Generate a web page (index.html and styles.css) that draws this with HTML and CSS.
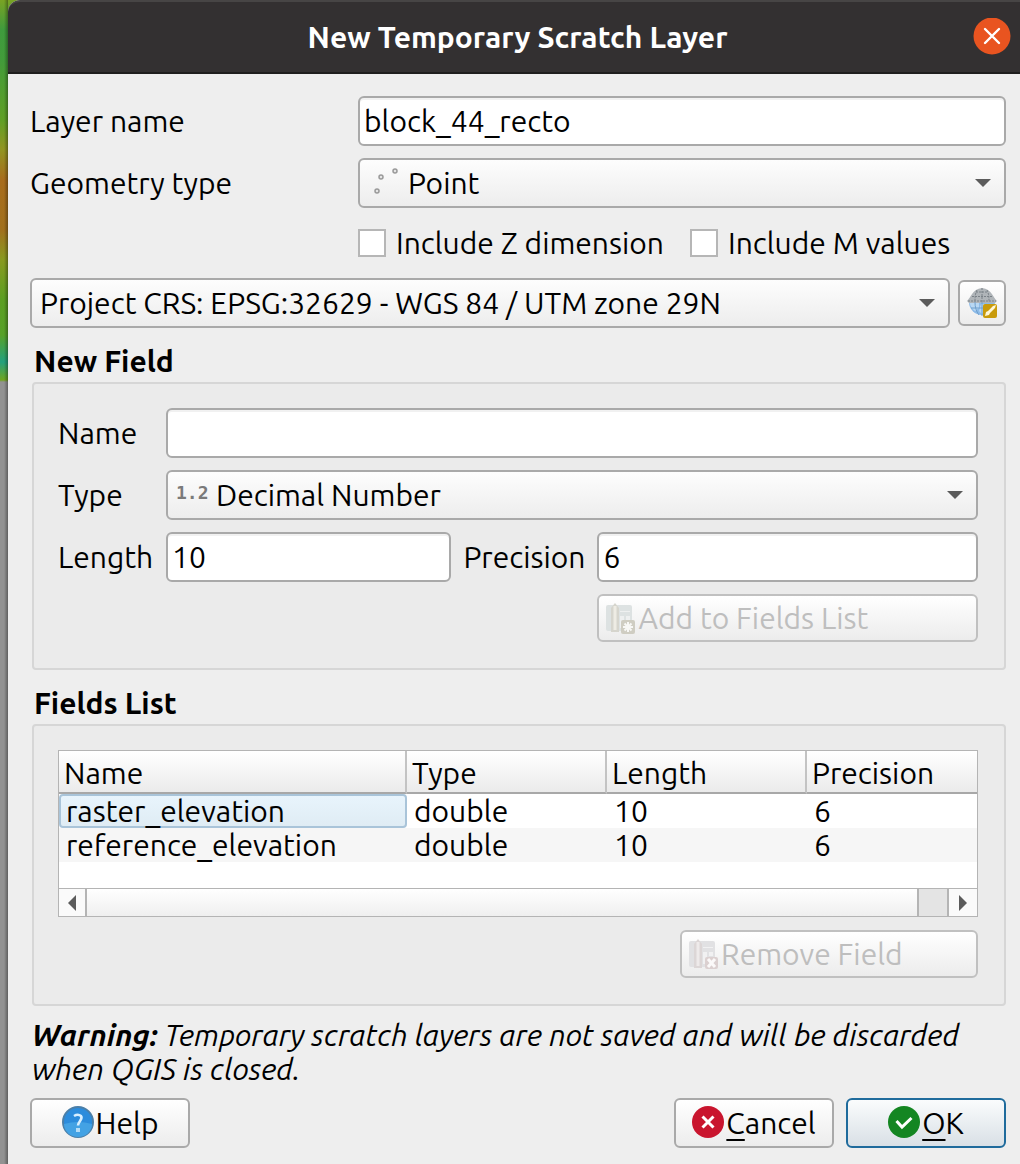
FILE: index.html
```html
<!DOCTYPE html>
<html lang="en">
<head>
<meta charset="utf-8">
<title>New Temporary Scratch Layer</title>
<link rel="stylesheet" href="styles.css">
</head>
<body>
<main class="dialog">
  <header class="titlebar">
    <h1 class="title">New Temporary Scratch Layer</h1>
    <button class="close" type="button" aria-label="Close">
      <svg width="38" height="38" viewBox="0 0 38 38"><circle cx="19" cy="18" r="18.500" fill="#e95420"/><path d="M12 11l14 14M26 11L12 25" stroke="#fff" stroke-width="2.4" stroke-linecap="round"/></svg>
    </button>
  </header>

  <form class="content">
    <div class="layer-grid">
      <label for="layer-name">Layer name</label>
      <input class="field" id="layer-name" type="text" value="block_44_recto">
      <label for="geometry">Geometry type</label>
      <div class="combo">
        <select class="field with-icon" id="geometry"><option>Point</option></select>
        <svg class="lead" width="32" height="32" viewBox="0 0 32 32" fill="#e4e4e4" stroke="#999" stroke-width="1.5"><circle cx="9" cy="24" r="2"/><circle cx="13" cy="10" r="2"/><circle cx="27" cy="4" r="2"/></svg>
        <svg class="arrow" width="16" height="8" viewBox="0 0 16 8"><path d="M0 0h16L8 8z" fill="#5b5b5b"/></svg>
      </div>
      <div class="checks">
        <label class="check"><input type="checkbox">Include Z dimension</label>
        <label class="check"><input type="checkbox">Include M values</label>
      </div>
    </div>

    <div class="crs-row">
      <div class="combo">
        <select class="field crs" aria-label="Coordinate reference system"><option>Project CRS: EPSG:32629 - WGS 84 / UTM zone 29N</option></select>
        <svg class="arrow" width="16" height="8" viewBox="0 0 16 8"><path d="M0 0h16L8 8z" fill="#5b5b5b"/></svg>
      </div>
      <button class="button tool" type="button" aria-label="Select CRS">
        <svg width="32" height="32" viewBox="0 0 32 32">
          <path d="M3 15h26a13 13 0 0 1-26 0z" fill="#8dbbe8"/>
          <path d="M4 16h9v5l-4 3c-3-2-5-5-5-8zM15 17h5v4l-4 6-3-3z" fill="#b9d8f3"/>
          <path d="M1 14C5 11 6 2 16 1c10 1 11 10 15 13l-2 2H3z" fill="#b0b5b9"/>
          <path d="M2 14h28M6 9.500h20M10 5h12M16 1v14M11 3C9 7 9 11 9 15M21 3c2 4 2 8 2 12" fill="none" stroke="#7b8288" stroke-width="1" stroke-dasharray="2 1"/>
          <path d="M9 15c0 5 1 9 4 13M16 15v14M5 21h13" fill="none" stroke="#6f9fcc"/>
          <rect x="17" y="17" width="14" height="14" rx="2" fill="#c99b0b"/>
          <path d="M19 29l1-4 2-1 5-5 3-1-1 3-5 5-1 2z" fill="#fff7d5"/>
        </svg>
      </button>
    </div>

    <section>
      <h2 class="heading">New Field</h2>
      <div class="group">
        <div class="field-grid">
          <label for="name">Name</label>
          <input class="field wide" id="name" type="text">
          <label for="type">Type</label>
          <div class="combo wide">
            <select class="field with-icon" id="type"><option>Decimal Number</option></select>
            <span class="lead decimal" aria-hidden="true">1.2</span>
            <svg class="arrow" width="16" height="8" viewBox="0 0 16 8"><path d="M0 0h16L8 8z" fill="#5b5b5b"/></svg>
          </div>
          <label for="length">Length</label>
          <input class="field" id="length" type="text" value="10">
          <label for="precision">Precision</label>
          <input class="field" id="precision" type="text" value="6">
          <button class="button add" type="button" disabled>
            <svg width="32" height="32" viewBox="0 0 32 32">
              <rect x="2" y="3" width="26" height="26" rx="2" fill="#dde2e2"/>
              <path d="M16 9h10v1h-10zM16 14h4v12h-4zM22 14h4v4h-4z" fill="#eef0f0"/>
              <path d="M7 6l4-5 4 5v24H7z" fill="#d6d5cd"/><path d="M11 4v24" stroke="#eeece4" stroke-width="3"/>
              <rect x="17" y="18" width="14" height="14" rx="2" fill="#cfcdc2"/>
              <path d="M24 20v10M19 25h10M20.500 21.500l7 7M27.500 21.500l-7 7" stroke="#f8f8f6" stroke-width="2"/>
            </svg>Add to Fields List
          </button>
        </div>
      </div>
    </section>

    <section>
      <h2 class="heading">Fields List</h2>
      <div class="group list-group">
        <div class="table-box">
          <table class="fields">
            <colgroup><col class="col-name"><col class="col-mid"><col class="col-mid"><col></colgroup>
            <thead><tr><th>Name</th><th>Type</th><th>Length</th><th>Precision</th></tr></thead>
            <tbody>
              <tr><td class="selected">raster_elevation</td><td>double</td><td>10</td><td>6</td></tr>
              <tr><td>reference_elevation</td><td>double</td><td>10</td><td>6</td></tr>
            </tbody>
          </table>
          <div class="scrollbar">
            <button class="step" type="button" aria-label="Scroll left"><svg width="8" height="16" viewBox="0 0 8 16"><path d="M8 0v16L0 8z" fill="#5b5b5b"/></svg></button>
            <div class="thumb"></div>
            <div class="track"></div>
            <button class="step" type="button" aria-label="Scroll right"><svg width="8" height="16" viewBox="0 0 8 16"><path d="M0 0v16l8-8z" fill="#5b5b5b"/></svg></button>
          </div>
        </div>
        <button class="button remove" type="button" disabled>
          <svg width="32" height="32" viewBox="0 0 32 32">
            <rect x="2" y="3" width="26" height="26" rx="2" fill="#e1e1e3"/>
            <path d="M16 9h10v1h-10zM16 14h4v12h-4zM22 14h4v4h-4z" fill="#f1f1f2"/>
            <path d="M7 6l4-5 4 5v24H7z" fill="#dcd6d6"/><path d="M11 4v24" stroke="#eeeaea" stroke-width="3"/>
            <rect x="18" y="19" width="13" height="12" rx="2" fill="#dbd0d0"/>
            <path d="M21 21l7 8M28 21l-7 8" stroke="#fbf9f9" stroke-width="3"/>
          </svg>Remove Field
        </button>
      </div>
    </section>

    <p class="warning"><strong>Warning:</strong> Temporary scratch layers are not saved and will be discarded when QGIS is closed.</p>

    <footer class="actions">
      <button class="button action help" type="button">
        <svg width="32" height="32" viewBox="0 0 32 32"><circle cx="16" cy="16" r="15" fill="#2c8cdc" stroke="#4b7fa8" stroke-width="2"/><path d="M2 18a14 13 0 0 0 28 0q-14-4-28 0z" fill="#43a2e4"/><path d="M12 10q4-2.500 7 0c2.500 3-3 5.500-3 9.500" fill="none" stroke="#d8efff" stroke-width="2.600"/><rect x="14" y="22" width="4" height="4" fill="#b5ddf7"/></svg>Help
      </button>
      <button class="button action" type="button">
        <svg width="32" height="32" viewBox="0 0 32 32"><circle cx="16" cy="16" r="16" fill="#c9152e"/><path d="M10.500 10.500l11 11M21.500 10.500l-11 11" stroke="#fff" stroke-width="3"/></svg><span><u>C</u>ancel</span>
      </button>
      <button class="button action ok" type="submit">
        <svg width="32" height="32" viewBox="0 0 32 32"><circle cx="16" cy="16" r="16" fill="#148622"/><path d="M8.500 15l5.500 6 9.500-9" fill="none" stroke="#fff" stroke-width="3"/></svg><span><u>O</u>K</span>
      </button>
    </footer>
  </form>
</main>
</body>
</html>
```
FILE: styles.css
```css
* { box-sizing: border-box; }

body {
  margin: 0;
  padding-left: 8px;
  min-height: 100vh;
  font: 30px/34px Ubuntu, "Noto Sans", sans-serif;
  color: #000;
  /* edge of the map canvas behind the dialog */
  background:
    linear-gradient(to right, transparent 4px, rgba(0, 0, 0, .35) 8px, transparent 8px),
    linear-gradient(#79a324 0, #3f9b3d 30px, #429c3a 60px, #5f9f25 120px, #929420 150px, #a86c1c 180px, #a1701d 230px, #889a20 260px, #5b9f22 300px, #57a128 335px, #23a17d 362px, #70a51f 380px, #929292 382px);
}

.dialog {
  display: flex;
  flex-direction: column;
  min-height: 100vh;
  background: #eee;
  border-radius: 12px 0 0 0;
}

.titlebar {
  display: grid;
  grid-template-columns: 38px 1fr 38px;
  align-items: center;
  height: 74px;
  padding: 0 9px 0 16px;
  border-top: 2px solid #474545;
  border-bottom: 2px solid #1f1e1e;
  border-radius: 12px 0 0 0;
  background: #333031;
}
.title {
  grid-column: 2;
  margin: 0;
  color: #fff;
  font-size: 30px;
  font-weight: 700;
  text-align: center;
}
.close { padding: 0; border: 0; background: none; height: 38px; }
.close svg { display: block; }

.content { padding: 22px 14px 16px 22px; }

.layer-grid {
  display: grid;
  grid-template-columns: 316px 1fr;
  gap: 12px;
  align-items: center;
}

.field {
  width: 100%;
  min-width: 0;
  height: 50px;
  padding: 0 4px;
  border: 2px solid #a9a9a9;
  border-radius: 6px;
  background: #fff;
  color: #000;
  font: inherit;
}
input.field { box-shadow: inset 0 2px #f1f1f1; }

.combo { display: grid; align-items: center; min-width: 0; }
.combo > * { grid-area: 1 / 1; }
select.field {
  appearance: none;
  background: linear-gradient(#fdfdfd, #ededed);
}
select.with-icon { padding-left: 48px; }
select.crs { padding-left: 8px; }
.lead { margin-left: 10px; pointer-events: none; }
.arrow { justify-self: end; margin-right: 15px; pointer-events: none; }
.decimal {
  font: 700 18px/24px "DejaVu Sans Mono", monospace;
  color: #7a7a7a;
  padding-bottom: 4px;
}

.checks {
  grid-column: 2;
  display: flex;
  gap: 26px;
  height: 46px;
  align-items: center;
}
.check { display: flex; align-items: center; gap: 10px; white-space: nowrap; }
.check input {
  appearance: none;
  width: 28px;
  height: 28px;
  margin: 0;
  border: 2px solid #b6b6b6;
  background: #fff;
}

.crs-row {
  display: grid;
  grid-template-columns: 1fr 48px;
  gap: 8px;
  align-items: center;
  margin-top: 12px;
}

.button {
  display: flex;
  align-items: center;
  gap: 2px;
  height: 48px;
  padding: 0 6px;
  border: 2px solid #a9a9a9;
  border-radius: 6px;
  background: linear-gradient(#fff, #ececec);
  color: #000;
  font: inherit;
  white-space: nowrap;
}
.button svg { flex: none; }
.button:disabled { padding-left: 5px; border-color: #c0c0c0; color: #bebebe; }
.tool { justify-content: center; height: 46px; }

.heading {
  margin: 0;
  padding: 16px 4px 4px;
  font-size: 30px;
  font-weight: 700;
}

.group {
  margin-left: 2px;
  padding: 24px 26px 26px 24px;
  border: 2px solid #d6d6d6;
  border-radius: 4px;
  background: #ebebeb;
}
.field-grid {
  display: grid;
  grid-template-columns: 96px 3fr auto 4fr;
  gap: 12px;
  align-items: center;
}
.wide { grid-column: 2 / -1; }
.add { grid-column: 4; }

.list-group {
  display: flex;
  flex-direction: column;
  gap: 13px;
}
.table-box {
  border: 1px solid #b4b4b4;
  background: #fff;
}
.fields {
  width: 100%;
  margin-bottom: 26px;
  border-collapse: separate;
  border-spacing: 0;
  table-layout: fixed;
}
.col-name { width: 348px; }
.col-mid { width: 200px; }
.fields th {
  height: 43px;
  padding: 2px 5px 0;
  border-right: 2px solid #c3c3c3;
  border-bottom: 2px solid #a8a8a8;
  background: linear-gradient(#fff, #ebebeb);
  font-weight: 400;
  text-align: left;
}
.fields th:last-child { border-right: 0; }
.fields td { height: 34px; padding: 0 7px; }
.fields tr:nth-child(2) td { background: #f6f6f6; }
.fields .selected {
  padding: 0 5px;
  border: 2px solid #a9c4d9;
  border-radius: 4px;
  background: linear-gradient(#e8f4fc, #dfecf4);
  line-height: 30px;
}
.scrollbar {
  display: grid;
  grid-template-columns: 26px 1fr 30px 28px;
  height: 28px;
  border-top: 1px solid #b4b4b4;
}
.step {
  display: grid;
  place-items: center;
  padding: 0;
  border: 0;
  background: #fafafa;
}
.thumb {
  border: solid #b4b4b4;
  border-width: 0 2px;
  background: linear-gradient(#fff, #efefef);
}
.track { border-right: 2px solid #b4b4b4; background: #e4e4e4; }
.remove { align-self: flex-end; width: 298px; }

.warning { margin: 12px 2px; font-style: italic; }

.actions { display: flex; gap: 12px; }
.action { justify-content: center; width: 160px; height: 50px; }
.action svg { margin-bottom: 2px; }
.help { margin-right: auto; }
.ok { border-color: #1f6b9c; background: linear-gradient(#fafcfd, #d9e0e6); }
.action u { text-decoration-thickness: 2px; text-underline-offset: 5px; text-decoration-skip-ink: none; }
```
